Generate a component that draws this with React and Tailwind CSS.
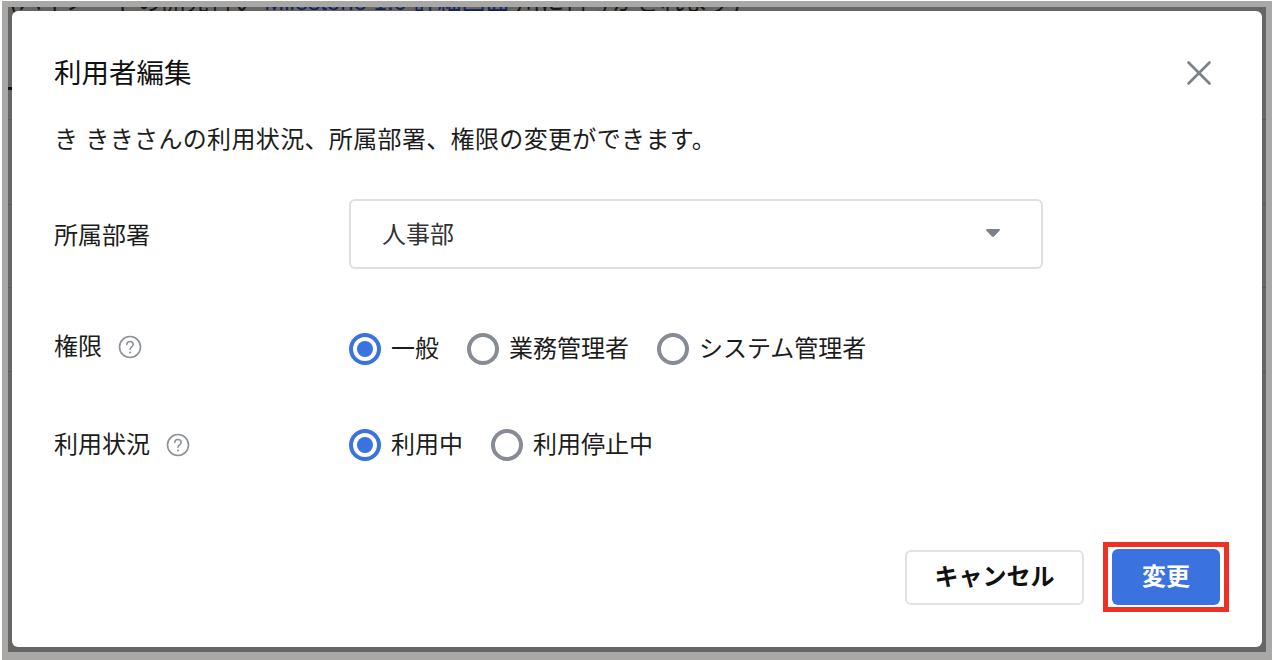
const RadioOption = ({ label, checked }) => (
  <label className="flex items-center gap-[10px]">
    {checked ? (
      <span className="flex h-[32px] w-[32px] items-center justify-center rounded-full border-[4px] border-[#3a72e0] bg-white">
        <span className="h-[16px] w-[16px] rounded-full bg-[#3a72e0]" />
      </span>
    ) : (
      <span className="h-[32px] w-[32px] rounded-full border-[4px] border-[#868b94] bg-white" />
    )}
    <span>{label}</span>
  </label>
);

const HelpIcon = () => (
  <svg width="24" height="24" viewBox="0 0 24 24" fill="none" className="ml-[16px]">
    <circle cx="12" cy="12" r="10.5" stroke="#8c9097" strokeWidth="1.6" />
    <path
      d="M8.800 9.600c0-1.900 1.400-3 3.200-3s3.200 1.100 3.200 2.800c0 2.400-3.200 2.500-3.200 5"
      stroke="#8c9097"
      strokeWidth="1.500"
      strokeLinecap="round"
    />
    <circle cx="12" cy="17.400" r="1" fill="#8c9097" />
  </svg>
);

const FormRow = ({ label, help, children, className, labelClass }) => (
  <div className={`flex items-center ${className}`}>
    <div className={`flex w-[295px] shrink-0 items-center ${labelClass}`}>
      <span>{label}</span>
      {help && <HelpIcon />}
    </div>
    {children}
  </div>
);

const App = () => {
  return (
    <div className="h-[660px] w-full bg-white pt-[1px] pr-[2px] pl-[2px] font-['Liberation_Sans','Noto_Sans_CJK_JP',sans-serif] text-[24px] text-[#1c1c1c]">
      <div className="h-full border-x-[6px] border-t-[6px] border-b-[8px] border-[#a9a8a6]">
        <div className="relative flex h-full overflow-hidden bg-[#666666] pt-[4px] pr-[4px] pb-[5px] pl-[4px]">
          {/* page behind the dialog, only its edges show */}
          <p className="absolute top-[-21px] left-[2px] whitespace-nowrap text-[24px] leading-[32px] text-[#161616]">
            (ハイノートの開発行い <span className="text-[#12215e]">Milestone 1.0 詳細画面</span> 川に付与がされます)
          </p>
          <div className="absolute inset-x-0 top-[30px] flex flex-col">
            <div className="h-[53px] w-[12px] border-b-[3px] border-[#111111]" />
            <div className="h-[30px] border-b border-[#5a5a5a]" />
            <div className="h-[85px] border-b border-[#5a5a5a]" />
            <div className="h-[83px] border-b border-[#5a5a5a]" />
            <div className="h-[84px] border-b border-[#5a5a5a]" />
          </div>

          <div className="relative flex flex-1 flex-col rounded-[6px] bg-white pr-[33px] pl-[42px]">
            <div className="flex items-start justify-between pt-[42px]">
              <h1 className="mt-[1px] text-[27.500px] leading-[40px] text-[#111111]">利用者編集</h1>
              <svg width="26" height="26" viewBox="0 0 26 26" fill="none" className="mt-[7px] mr-[17px]">
                <path d="M2.500 2.500 23.500 23.500M23.500 2.500 2.500 23.500" stroke="#7b8089" strokeWidth="2.600" strokeLinecap="round" />
              </svg>
            </div>

            <p className="mt-[29px] leading-[34px] tracking-[0.35px]">き ききさんの利用状況、所属部署、権限の変更ができます。</p>

            <FormRow label="所属部署" className="mt-[42px]" labelClass="pt-[4px]">
              <div className="flex h-[70px] w-[694px] items-center justify-between rounded-[6px] border-2 border-[#dde0e1] pr-[40px] pl-[31px] text-[#333333]">
                <span className="pt-[2px]">人事部</span>
                <svg width="16" height="10" viewBox="0 0 16 10" className="mt-[-2px]">
                  <path d="M2 1h12c.9 0 1.300 1 .7 1.600L9 8.600c-.5.6-1.500.6-2 0L1.300 2.600C.7 2 1.100 1 2 1Z" fill="#7b8089" />
                </svg>
              </div>
            </FormRow>

            <FormRow label="権限" help className="mt-[60px]" labelClass="pb-[4px]">
              <div className="flex gap-[28px]">
                <RadioOption label="一般" checked />
                <RadioOption label="業務管理者" />
                <RadioOption label="システム管理者" />
              </div>
            </FormRow>

            <FormRow label="利用状況" help className="mt-[58px]">
              <div className="flex gap-[28px]">
                <RadioOption label="利用中" checked />
                <RadioOption label="利用停止中" />
              </div>
            </FormRow>

            <div className="mt-auto flex items-end justify-end gap-[19px] pb-[35px]">
              <button className="mb-[7px] h-[55px] w-[179px] rounded-[6px] border-2 border-[#dfe3e3] bg-white pb-[2px] font-bold text-[#111111]">
                キャンセル
              </button>
              <div className="border-[5px] border-[#ee3124] px-[4px] py-[2px]">
                <button className="block h-[56px] w-[108px] rounded-[6px] bg-[#3a72e0] font-bold text-white">
                  変更
                </button>
              </div>
            </div>
          </div>
        </div>
      </div>
    </div>
  );
};

export default App;
